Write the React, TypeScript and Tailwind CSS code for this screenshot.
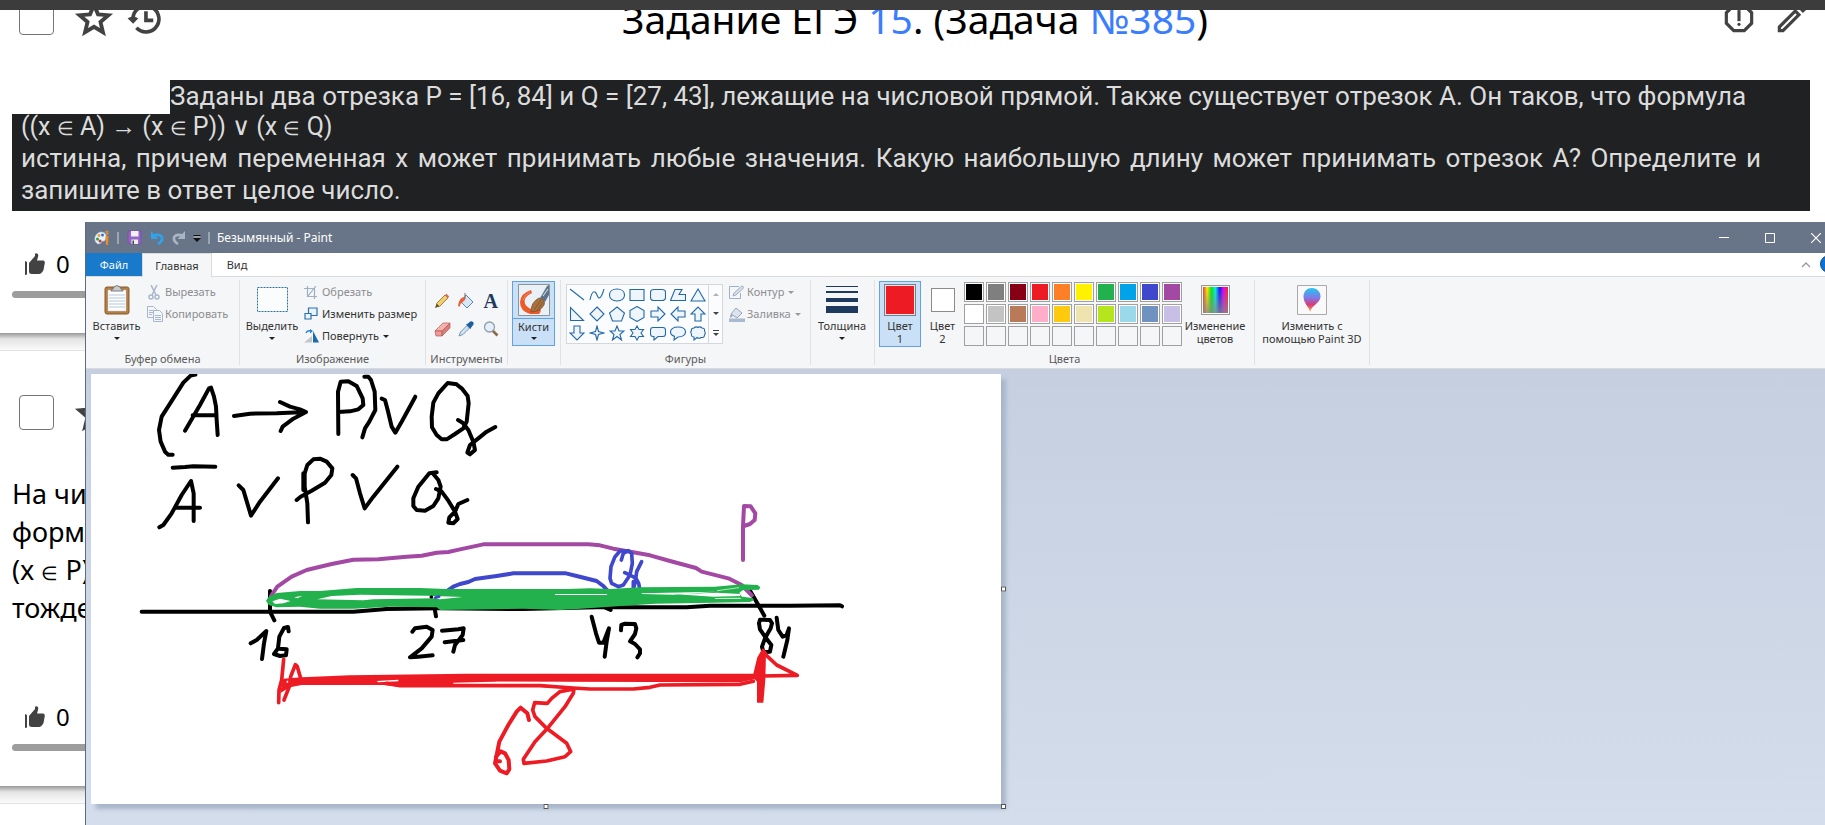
import type { ReactNode } from "react";

const TOP_COLORS = ["#000000", "#7f7f7f", "#880015", "#ed1c24", "#ff7f27", "#fff200", "#22b14c", "#00a2e8", "#3f48cc", "#a349a4"];
const BOTTOM_COLORS = ["#ffffff", "#c3c3c3", "#b97a57", "#ffaec9", "#ffc90e", "#efe4b0", "#b5e61d", "#99d9ea", "#7092be", "#c8bfe7"];
const EMPTY_SLOTS = Array.from({ length: 10 }, () => "");

const SHAPES: { name: string; d: string }[] = [
  { name: "Линия", d: "M1 2L15 13" },
  { name: "Кривая", d: "M1 13C3 3 6 3 8 8S12 12 15 2" },
  { name: "Овал", d: "M8 2C12.500 2 15.500 4.500 15.500 8S12.500 14 8 14S.5 11.500 .5 8S3.500 2 8 2Z" },
  { name: "Прямоугольник", d: "M1 2.500H15V13.500H1Z" },
  { name: "Скруглённый прямоугольник", d: "M4 2.500H12Q15.500 2.500 15.500 5.500V10.500Q15.500 13.500 12 13.500H4Q.5 13.500 .5 10.500V5.500Q.5 2.500 4 2.500Z" },
  { name: "Многоугольник", d: "M5 2.500H12L9 7.500H15.500V13.500H.5Z" },
  { name: "Треугольник", d: "M8 2L15 14H1Z" },
  { name: "Прямоугольный треугольник", d: "M1.500 1.500V14.500H14.500Z" },
  { name: "Ромб", d: "M8 1L15 8L8 15L1 8Z" },
  { name: "Пятиугольник", d: "M8 1L15.500 7L12.500 15H3.500L.5 7Z" },
  { name: "Шестиугольник", d: "M8 .5L15 4.500V11.500L8 15.500L1 11.500V4.500Z" },
  { name: "Стрелка вправо", d: "M1 5H8V1L15 8L8 15V11H1Z" },
  { name: "Стрелка влево", d: "M15 5H8V1L1 8L8 15V11H15Z" },
  { name: "Стрелка вверх", d: "M5 15V8H1L8 1L15 8H11V15Z" },
  { name: "Стрелка вниз", d: "M5 1V8H1L8 15L15 8H11V1Z" },
  { name: "Звезда 4", d: "M8 1L9.500 6.500L15 8L9.500 9.500L8 15L6.500 9.500L1 8L6.500 6.500Z" },
  { name: "Звезда 5", d: "M8 1L10 6H15L11 9.500L12.500 15L8 11.500L3.500 15L5 9.500L1 6H6Z" },
  { name: "Звезда 6", d: "M8 1L10 4.500H14.500L12 8L14.500 11.500H10L8 15L6 11.500H1.500L4 8L1.500 4.500H6Z" },
  { name: "Прямоугольная выноска", d: "M3 2.500H13Q15.500 2.500 15.500 5V9Q15.500 11.500 13 11.500H8L4 15V11.500H3Q.5 11.500 .5 9V5Q.5 2.500 3 2.500Z" },
  { name: "Овальная выноска", d: "M8 2C12.500 2 15.500 4 15.500 7S12.500 12 8 12L4 15L4.500 11.300C2 10.500 .5 9 .5 7C.5 4 3.500 2 8 2Z" },
  { name: "Выноска-облако", d: "M4 3Q6 1 8 2.500Q10 1 12 3Q15 3 14.500 6Q16 8 14.500 10Q14.500 13 11 12.500Q9 14 7 12.500L4 15V12Q1 12 1.500 9Q0 7 1.500 5.500Q1 3 4 3Z" },
];

function Caret({ className = "text-[#222]" }: { className?: string }) {
  return (
    <svg aria-hidden="true" className={className} width="6" height="3" viewBox="0 0 6 3" fill="currentColor">
      <path d="M0 0H6L3 3Z" />
    </svg>
  );
}

function ThumbIcon() {
  return (
    <svg aria-hidden="true" width="22" height="22" viewBox="0 0 22 22" fill="#424242">
      <path d="M1 8L3 9V21.500L1 22Z" />
      <path d="M5 10L11 3V1Q11.500 0 12.500 .2Q15 1 14 4L13 7.500H19.500Q21 8 20.800 10L19.500 17Q17.500 21 15 21H8Q5 21 5 18.500Z" />
    </svg>
  );
}

function StarIcon() {
  return (
    <svg aria-hidden="true" width="42" height="42" viewBox="0 -.7 24 24" fill="none" stroke="#424242" strokeWidth="2.200">
      <path d="M12 3.800L14.300 9.200L20.200 9.700L15.700 13.600L17.100 19.400L12 16.300L6.900 19.400L8.300 13.600L3.800 9.700L9.700 9.200Z" />
    </svg>
  );
}

function TaskHeader({ id, children }: { id: string; children: ReactNode }) {
  return (
    <header className="flex h-[35px] items-center pr-[14px] pl-[19px]">
      <div className="flex flex-1 items-center">
        <label htmlFor={id} className="sr-only">Выбрать задачу</label>
        <input id={id} type="checkbox" className="size-[35px] shrink-0 appearance-none rounded border border-[#767676] bg-white" />
        <button aria-label="В избранное" className="ml-[19px] shrink-0"><StarIcon /></button>
        <button aria-label="История" className="ml-[11px] shrink-0">
          <svg aria-hidden="true" width="38" height="38" viewBox="0 0 24 24" fill="none" stroke="#424242" strokeWidth="2.300">
            <path d="M4.400 12.500A8.200 8.200 0 1 1 6.600 18.200" />
            <path d="M12.600 7.800V13.500H17.200" />
            <path d="M1 12.200L4.500 10.800L7.800 12.200L4.500 15.700Z" fill="#424242" stroke="none" />
          </svg>
        </button>
      </div>
      <h2 className="pt-[2px] text-center text-[39px] leading-10 whitespace-nowrap text-black">{children}</h2>
      <div className="flex flex-1 items-center justify-end">
        <button aria-label="Сообщить об ошибке" className="shrink-0">
          <svg aria-hidden="true" width="38" height="38" viewBox="0 0 24 24" fill="#424242">
            <path d="M15.730 3H8.270L3 8.270v7.460L8.270 21h7.460L21 15.730V8.270L15.730 3zM19 14.900L14.900 19H9.100L5 14.900V9.100L9.100 5h5.800L19 9.100v5.800z" />
            <circle cx="12" cy="16" r="1" />
            <path d="M11 7h2v7h-2z" />
          </svg>
        </button>
        <button aria-label="Редактировать" className="ml-[15px] shrink-0">
          <svg aria-hidden="true" width="38" height="38" viewBox="0 0 24 24" fill="#424242">
            <path d="M14.060 9.020l.92.92L5.920 19H5v-.92l9.060-9.060M17.660 3c-.25 0-.51.1-.7.290l-1.830 1.830 3.750 3.750 1.830-1.830c.39-.39.39-1.020 0-1.410l-2.340-2.340c-.2-.2-.45-.29-.71-.29zm-3.600 3.190L3 17.250V21h3.750L17.810 9.940l-3.750-3.750z" />
          </svg>
        </button>
      </div>
    </header>
  );
}

function TaskFooter() {
  return (
    <footer className="pl-3">
      <button className="ml-3 flex h-[22px] items-center gap-[10px] text-[24px] leading-[22px] text-black">
        <ThumbIcon />0
      </button>
      <div className="mt-4 mr-3 h-[7px] rounded-full bg-[#9d9d9d]" />
    </footer>
  );
}

function CardGap() {
  return <div className="h-[18px] shrink-0 border-b border-[#e2e2e2] bg-linear-to-b from-[#999] via-[#e4e4e4] via-35% to-[#fbfbfb]" />;
}

function ElementOf() {
  return <span className="text-[19px] leading-none">∈</span>;
}

function Group({ label, className, children }: { label?: string; className: string; children: ReactNode }) {
  return (
    <section className={`flex shrink-0 flex-col border-r border-[#e0e2e5] ${className}`}>
      <div className="flex grow">{children}</div>
      <h3 className="h-3 text-center leading-3 text-[#5a5a5a]">{label}</h3>
    </section>
  );
}

function BigButton({ icon, text, caret, className }: { icon: ReactNode; text: ReactNode; caret?: boolean; className: string }) {
  return (
    <button className={`flex h-[66px] shrink-0 flex-col items-center ${className}`}>
      <span className="flex h-[39px] w-full items-center justify-center">{icon}</span>
      <span className="leading-[13px]">{text}</span>
      {caret && <span className="mt-[5px] flex"><Caret /></span>}
    </button>
  );
}

function RowButton({ icon, text, muted, caret }: { icon: ReactNode; text: string; muted?: boolean; caret?: boolean }) {
  return (
    <button className={`flex h-[22px] items-center whitespace-nowrap ${muted ? "text-[#8b8d91]" : "text-[#333]"}`}>
      <span className="flex w-[18px] shrink-0">{icon}</span>
      <span>{text}</span>
      {caret && <span className="ml-1"><Caret className={muted ? "text-[#999]" : "text-[#222]"} /></span>}
    </button>
  );
}

function TitleBar() {
  return (
    <div className="flex h-[31px] shrink-0 items-center bg-[#687588] pl-2 text-[12px] text-white">
      <svg aria-hidden="true" width="16" height="16" viewBox="0 0 16 16">
        <path d="M1 7Q3 2 8 2Q13 3 12 8Q11 12 8 11Q7 14 4 14Q0 12 1 7Z" fill="#e6f1fb" stroke="#a8c8e4" strokeWidth=".6" />
        <circle cx="3.500" cy="9" r="1.500" fill="#3b9a3f" />
        <circle cx="5" cy="5.500" r="1.400" fill="#e8a030" />
        <circle cx="8.500" cy="5" r="1.500" fill="#3a6fd0" />
        <circle cx="6" cy="11" r="1.500" fill="#c93a3a" />
        <path d="M11.500 6H14.500L14 15H12Z" fill="#f08a24" />
        <path d="M11 1L14.500 .5V5H12Z" fill="#c98a4a" />
      </svg>
      <span className="ml-[7px] h-3 w-[2px] bg-[#9aa4b2]" />
      <button aria-label="Сохранить" className="ml-2">
        <svg aria-hidden="true" width="15" height="15" viewBox="0 0 15 15">
          <path d="M1 1H14V14H3L1 12Z" fill="#9467c4" stroke="#7c4fae" />
          <path d="M4 1H11.500V6.500H4Z" fill="#f4f0fa" />
          <path d="M4.500 9.500H11V14H4.500Z" fill="#eee" />
          <path d="M5.500 10.500H7V14H5.500Z" fill="#444" />
        </svg>
      </button>
      <button aria-label="Отменить" className="ml-2">
        <svg aria-hidden="true" width="14" height="14" viewBox="0 0 14 14" fill="none">
          <path d="M3 5Q10 2 12 6.500Q13 10 8 13" stroke="#2fa4ee" strokeWidth="2.600" />
          <path d="M1 0V8H8.500Z" fill="#2fa4ee" />
        </svg>
      </button>
      <button aria-label="Повторить" className="ml-2">
        <svg aria-hidden="true" width="14" height="14" viewBox="0 0 14 14" fill="none">
          <path d="M11 5Q4 2 2 6.500Q1 10 6 13" stroke="#a9b4c4" strokeWidth="2.600" />
          <path d="M13 0V8H5.500Z" fill="#a9b4c4" />
        </svg>
      </button>
      <button aria-label="Настройка панели" className="ml-[7px]">
        <svg aria-hidden="true" width="8" height="8" viewBox="0 0 8 8">
          <path d="M.5 1H7.500V2.500H.5Z" fill="#111" />
          <path d="M0 4H8L4 8Z" fill="#111" />
          <path d="M.5 2.500H7.500V3.300H.5Z" fill="#fff" />
        </svg>
      </button>
      <span className="ml-[7px] h-3 w-[2px] bg-[#9aa4b2]" />
      <h1 className="ml-[7px]">Безымянный - Paint</h1>
      <div className="ml-auto flex">
        <button aria-label="Свернуть" className="flex h-[31px] w-[46px] items-center justify-center">
          <svg aria-hidden="true" width="10" height="10" viewBox="0 0 10 10"><path d="M0 4.500H10" stroke="#fff" /></svg>
        </button>
        <button aria-label="Развернуть" className="flex h-[31px] w-[46px] items-center justify-center">
          <svg aria-hidden="true" width="10" height="10" viewBox="0 0 10 10" fill="none"><path d="M.5 .5H9.500V9.500H.5Z" stroke="#fff" /></svg>
        </button>
        <button aria-label="Закрыть" className="flex h-[31px] w-[46px] items-center justify-center">
          <svg aria-hidden="true" width="10" height="10" viewBox="0 0 10 10"><path d="M0 0L10 10M10 0L0 10" stroke="#fff" strokeWidth="1.200" /></svg>
        </button>
      </div>
    </div>
  );
}

function TabRow() {
  return (
    <nav className="flex h-6 shrink-0 border-b border-[#dadbdc] bg-white text-[#333]">
      <button className="h-[23px] w-14 bg-[#1979ca] text-white">Файл</button>
      <button className="-mb-px h-6 w-[70px] border-x border-t border-[#dadbdc] bg-[#f5f6f7]">Главная</button>
      <button className="h-[23px] w-[50px]">Вид</button>
      <button aria-label="Свернуть ленту" className="mr-[9px] ml-auto">
        <svg aria-hidden="true" width="10" height="6" viewBox="0 0 10 6" fill="none"><path d="M1 5L5 1L9 5" stroke="#999" strokeWidth="1.300" /></svg>
      </button>
      <button aria-label="Справка" className="mt-[2px] mr-[1px] size-[18px] rounded-full border border-[#0a4f94] bg-[#0b74d1] leading-4 text-white">?</button>
    </nav>
  );
}

function Tools() {
  return (
    <div className="mt-[6px] grid h-14 w-full grid-cols-3 place-items-center px-1">
      <button aria-label="Карандаш">
        <svg aria-hidden="true" width="16" height="16" viewBox="0 0 16 16">
          <path d="M1 15L2.500 10.500L5.500 13.500Z" fill="#6b5033" />
          <path d="M2.500 10.500L11 2L14 5L5.500 13.500Z" fill="#f2cf6b" stroke="#8a6a2c" strokeWidth=".8" />
          <path d="M11 2L12.500 .8L15.200 3.500L14 5Z" fill="#d66a62" />
        </svg>
      </button>
      <button aria-label="Заливка цветом">
        <svg aria-hidden="true" width="18" height="16" viewBox="0 0 18 16">
          <path d="M9 2L16 9L10 15L4 9Z" fill="#d5e6f4" stroke="#5f88ad" />
          <path d="M8 0V6" stroke="#6d6d6d" />
          <path d="M8 4Q2 4 1 13Q3 15 3.500 11L8 7Z" fill="#ee5f35" />
        </svg>
      </button>
      <button aria-label="Текст" className="font-[Liberation_Serif,serif] text-[20px] leading-5 font-bold text-[#1f3a5f]">A</button>
      <button aria-label="Ластик">
        <svg aria-hidden="true" width="17" height="15" viewBox="0 0 17 15" stroke="#b45a58" strokeWidth=".7">
          <path d="M1 9L9 1H16L8 9Z" fill="#f6b3ad" />
          <path d="M1 9H8V14H2Z" fill="#ee9a95" />
          <path d="M8 9L16 1V6L8 14Z" fill="#d97f7b" />
        </svg>
      </button>
      <button aria-label="Палитра">
        <svg aria-hidden="true" width="16" height="16" viewBox="0 0 16 16">
          <path d="M1 15L2.500 11L9 4.500L11.500 7L5 13.500Z" fill="#cfe3f2" stroke="#5f7f9c" strokeWidth=".8" />
          <path d="M8 3.500L10 2.500Q13 -1 15 1T13.500 6L12.500 8Z" fill="#1c5f9f" />
        </svg>
      </button>
      <button aria-label="Масштаб">
        <svg aria-hidden="true" width="16" height="16" viewBox="0 0 16 16">
          <path d="M9.500 9.500L14.500 14.500" stroke="#8c6a4c" strokeWidth="2.600" />
          <circle cx="6.500" cy="6" r="5" fill="#e3effa" stroke="#8f9cab" strokeWidth="1.300" />
        </svg>
      </button>
    </div>
  );
}

function Palette() {
  return (
    <div className="mt-[2px] grid shrink-0 grid-cols-10 gap-[2px] self-start">
      {[...TOP_COLORS, ...BOTTOM_COLORS, ...EMPTY_SLOTS].map((color, i) => (
        <button
          key={i}
          aria-label={color ? `Цвет ${color}` : "Пустая ячейка"}
          className={`size-5 border border-[#a0a0a0] p-px ${color ? "bg-white" : "bg-[#f5f6f7]"}`}
        >
          <span className="block size-4" style={{ backgroundColor: color || "transparent" }} />
        </button>
      ))}
    </div>
  );
}

function Ribbon() {
  return (
    <div className="flex h-[92px] shrink-0 border-b border-[#d8dadc] bg-[#f5f6f7] pt-[3px] pb-[3px] text-[#333]">
      <Group label="Буфер обмена" className="w-[154px]">
        <BigButton
          className="w-[61px]"
          text="Вставить"
          caret
          icon={
            <svg aria-hidden="true" width="26" height="30" viewBox="0 0 26 30">
              <rect x="1" y="2" width="24" height="27" rx="2" fill="#b47d43" stroke="#8a5b2b" />
              <path d="M4 5H22V26H4Z" fill="#fbfdff" stroke="#c4cdd6" strokeWidth=".5" />
              <path d="M5 10H21M5 13H21M5 16H21M5 19H21M5 22H21" stroke="#b8c9d9" />
              <path d="M7 5Q9 5 10 2Q13 -1 16 2Q17 5 19 5V6H7Z" fill="#c9cccf" stroke="#666" strokeWidth=".8" />
            </svg>
          }
        />
        <div className="mt-px">
          <RowButton
            muted
            text="Вырезать"
            icon={
              <svg aria-hidden="true" width="14" height="15" viewBox="0 0 14 15" fill="none" stroke="#a9b7ca" strokeWidth="1.500">
                <path d="M4 0L9 10M10 0L5 10" />
                <circle cx="4" cy="12" r="2" />
                <circle cx="10" cy="12" r="2" />
              </svg>
            }
          />
          <RowButton
            muted
            text="Копировать"
            icon={
              <svg aria-hidden="true" width="16" height="16" viewBox="0 0 16 16" fill="#f3f6fb" stroke="#a9b7ca">
                <path d="M.5 .5H6.500L9.500 3.500V11.500H.5Z" />
                <path d="M2 4.500H7M2 6.500H7M2 8.500H5" />
                <path d="M6.500 4.500H12.500L15.500 7.500V15.500H6.500Z" />
                <path d="M8 9.500H14M8 11.500H14M8 13.500H14" />
              </svg>
            }
          />
        </div>
      </Group>
      <Group label="Изображение" className="w-[186px]">
        <BigButton
          className="w-[64px]"
          text="Выделить"
          caret
          icon={
            <svg aria-hidden="true" width="31" height="25" viewBox="0 0 31 25" fill="#fbfcfe">
              <path d="M.5 .5H30.500V24.500H.5Z" stroke="#2a6fb0" strokeDasharray="2 1" />
            </svg>
          }
        />
        <div className="mt-px">
          <RowButton
            muted
            text="Обрезать"
            icon={
              <svg aria-hidden="true" width="13" height="13" viewBox="0 0 13 13" fill="none" stroke="#9fb0c4" strokeWidth="1.200">
                <path d="M3.500 0V10.500H13M0 2.500H10.500V13M12 0L4 10" />
              </svg>
            }
          />
          <RowButton
            text="Изменить размер"
            icon={
              <svg aria-hidden="true" width="14" height="14" viewBox="0 0 14 14" fill="#eaf4fc" stroke="#2a6fb0" strokeWidth="1.200">
                <path d="M4.500 1H13V8.500H4.500Z" />
                <path d="M1 6.500H7V12H1Z" />
              </svg>
            }
          />
          <RowButton
            text="Повернуть"
            caret
            icon={
              <svg aria-hidden="true" width="15" height="14" viewBox="0 0 15 14">
                <path d="M0 13.500H8V7Z" fill="#c3c7cc" />
                <path d="M9 2V13.500H15Z" fill="#1f68ab" />
                <path d="M2 4Q3 1 7 2" fill="none" stroke="#2a7fcf" strokeWidth="1.300" />
                <path d="M6 0V4.500L9 2Z" fill="#2a7fcf" />
              </svg>
            }
          />
        </div>
      </Group>
      <Group label="Инструменты" className="w-[82px]">
        <Tools />
      </Group>
      <Group className="w-[53px]">
        <button className="mt-px ml-1 flex h-[65px] w-[43px] flex-col items-center border border-[#62a2e4] bg-[#c9e0f7]">
          <span className="flex h-[37px] w-full items-center justify-center border-b border-[#62a2e4]">
            <svg aria-hidden="true" width="32" height="32" viewBox="0 0 32 32">
              <path d="M.5 .5H31.500V31.500H.5Z" fill="#e9f1f6" stroke="#8f9499" />
              <path d="M13 6Q3 9 2 18Q2 27 12 30H21Q24 27 22 24Q16 27 11 24Q5 20 7 15Q9 11 14 9Z" fill="#ec5a2b" />
              <path d="M5 16Q7 10 12 8" fill="none" stroke="#f58a5c" />
              <path d="M22 14L29 2L31 1V11L27 18Z" fill="#5c7389" />
              <path d="M25 12L30 5" stroke="#c8d4de" strokeWidth="1.200" />
              <path d="M13 28Q13 18 21 14Q28 16 26 21Q22 28 13 28Z" fill="#a8713f" stroke="#7b4f28" strokeWidth=".8" />
              <path d="M16 26L23 16M19 27L25 18" stroke="#7b4f28" strokeWidth=".7" />
            </svg>
          </span>
          <span className="leading-[15px]">Кисти</span>
          <span className="mt-[3px] flex"><Caret /></span>
        </button>
      </Group>
      <Group label="Фигуры" className="w-[250px]">
        <div className="mt-1 ml-[5px] flex h-[60px] w-[157px] shrink-0 border border-[#d5d7da] bg-[#fbfcfd]">
          <div className="grid w-[141px] grid-cols-7 grid-rows-3 place-items-center">
            {SHAPES.map((shape) => (
              <button key={shape.name} aria-label={shape.name}>
                <svg aria-hidden="true" width="16" height="16" viewBox="0 0 16 16" fill={shape.d.endsWith("Z") ? "#eef6fc" : "none"} stroke="#2468a8" strokeWidth="1.100">
                  <path d={shape.d} />
                </svg>
              </button>
            ))}
          </div>
          <div className="grid w-[14px] grid-rows-3 place-items-center border-l border-[#d5d7da]">
            <button aria-label="Вверх"><Caret className="rotate-180 text-[#b0b4ba]" /></button>
            <button aria-label="Вниз"><Caret className="text-[#444]" /></button>
            <button aria-label="Все фигуры" className="flex flex-col items-center gap-[2px]">
              <span className="h-px w-[6px] bg-[#444]" />
              <Caret className="text-[#444]" />
            </button>
          </div>
        </div>
        <div className="mt-px ml-[6px]">
          <RowButton
            muted
            caret
            text="Контур"
            icon={
              <svg aria-hidden="true" width="16" height="14" viewBox="0 0 16 14" fill="none" stroke="#9fb0c4">
                <path d="M10 1.500H.5V13.500H11.500V8" />
                <path d="M4 11L5 8L13 .8L15 2.500L7 10Z" fill="#d5deea" />
              </svg>
            }
          />
          <RowButton
            muted
            caret
            text="Заливка"
            icon={
              <svg aria-hidden="true" width="16" height="15" viewBox="0 0 16 15">
                <path d="M0 11.500H16V15H0Z" fill="#a9b9d0" />
                <path d="M7 1L13 6L8 11L2 7Z" fill="#dbe3ee" stroke="#94a6bd" />
                <path d="M2 7Q1 8 1 11L4 9Z" fill="#94a6bd" />
              </svg>
            }
          />
        </div>
      </Group>
      <Group className="w-16">
        <BigButton
          className="w-[62px]"
          text="Толщина"
          caret
          icon={
            <svg aria-hidden="true" width="32" height="28" viewBox="0 0 32 28" fill="#1f3a5f">
              <path d="M0 0H32V1H0ZM0 5H32V7H0ZM0 12H32V16H0ZM0 20H32V27H0Z" />
            </svg>
          }
        />
      </Group>
      <Group label="Цвета" className="w-[380px]">
        <button className="mt-px ml-1 flex h-[66px] w-[42px] shrink-0 flex-col items-center border border-[#62a2e4] bg-[#c9e0f7] leading-[13px]">
          <span className="mt-[2px] mb-[3px] block size-8 border border-[#7f7f7f] bg-[#ed1c24] outline-1 -outline-offset-2 outline-[#d8eafb]" />
          Цвет<br />1
        </button>
        <button className="mt-px flex h-[66px] w-[43px] shrink-0 flex-col items-center leading-[13px]">
          <span className="mt-[7px] mb-[7px] block size-6 border border-[#8c8c8c] bg-white" />
          Цвет<br />2
        </button>
        <Palette />
        <BigButton
          className="ml-[2px] w-[62px]"
          text={<>Изменение<br />цветов</>}
          icon={
            <span className="border border-[#999] bg-white p-px">
              <span className="block h-[26px] w-[25px] bg-[linear-gradient(to_top,#888c,transparent),linear-gradient(to_right,#f33,#fe0,#0e0,#0ee,#11f,#e0e,#f22)]" />
            </span>
          }
        />
      </Group>
      <Group className="w-[115px]">
        <BigButton
          className="w-[114px]"
          text={<>Изменить с<br />помощью Paint 3D</>}
          icon={
            <svg aria-hidden="true" width="30" height="30" viewBox="0 0 30 30">
              <defs>
                <linearGradient id="drop" x1="0" y1="0" x2="0" y2="1">
                  <stop offset="0" stopColor="#22c8ee" />
                  <stop offset=".4" stopColor="#7d7bea" />
                  <stop offset=".7" stopColor="#d93a78" />
                  <stop offset="1" stopColor="#fbb040" />
                </linearGradient>
              </defs>
              <path d="M.5 .5H29.500V29.500H.5Z" fill="#f9f9f9" stroke="#aaa" />
              <path d="M15 3C20 3 24 7 23.500 12C23 18 15 20 13 27C13 23 6 18 6.500 11C7 6 10 3 15 3Z" fill="url(#drop)" />
            </svg>
          }
        />
      </Group>
    </div>
  );
}

function Drawing() {
  return (
    <svg role="img" aria-label="Рисунок" className="block" width="910" height="430" viewBox="91 374 910 430" fill="none" strokeLinecap="round" strokeLinejoin="round">
      <g transform="translate(90 370) scale(.33333)" stroke="#000" strokeWidth="12">
        <path d="M316 14L302 17L280 38L250 85L215 140L207 180L212 215L225 245L235 254H248" />
        <path d="M285 182L330 105L357 55L363 53L372 80L378 110L380 150L383 195M308 136H378" />
        <path d="M432 138L480 131L560 130L648 126M570 96L600 110L630 118L648 126L610 146L578 170L572 183" />
        <path d="M745 192L744 65L752 35L775 34L800 48L818 85L820 105L805 118L780 124L745 126" />
        <path d="M823 20H835L843 30L854 65L856 120L838 155L825 175L817 202" />
        <path d="M875 86L885 90L893 120L905 170L916 188L935 155L976 80" />
        <path d="M1100 43L1073 39L1045 70L1030 98L1025 140L1026 172L1040 195L1055 208H1070L1095 192L1120 175L1130 155L1136 100L1133 78L1115 55L1098 42" />
        <path d="M1104 150L1118 158L1135 180L1150 215L1155 240L1140 253L1132 248L1140 225L1165 205L1190 185L1216 171" />
        <path d="M248 293L285 291L310 289L376 290" />
        <path d="M208 472L220 465L245 430L275 375L303 333L311 370V453M258 413H330" />
        <path d="M446 346L460 360L472 400L483 437L510 395L564 325" />
        <path d="M654 457L652 400L644 350V310L652 285L670 268L690 266L710 275L727 295L724 315L705 338L665 362L632 380L620 390M640 310V360" />
        <path d="M788 315L798 325L810 370L824 415L850 380L922 290" />
        <path d="M1040 307L1018 310L985 350L970 385V408L980 420L1005 422L1030 408L1045 385L1052 350L1045 330L1030 312" />
        <path d="M1038 357L1055 365L1075 392L1095 425L1103 447L1090 460L1075 458L1078 442L1095 425L1105 402L1132 390" />
      </g>
      <g transform="translate(240 490) scale(.33333)" strokeWidth="12">
        <path d="M-295 365H340L440 357L600 355L850 357L1070 352H1340L1410 347H1650L1800 346L1806 349" stroke="#000" />
        <path d="M90 303V365L103 391M583 350L588 379M1095 352L1112 360M1532 305L1555 345L1573 377" stroke="#000" />
        <path d="M93 318L112 290L155 260L200 240L275 222L340 209L415 208L500 200L545 197L590 188L625 186L660 178L730 163H1045L1080 166L1120 176L1230 196L1290 213L1368 234L1385 245L1465 265L1505 285L1535 316" stroke="#a349a4" />
        <path d="M600 318L640 290L660 282L685 276L705 267L770 258L820 250H978L1010 258L1070 273L1090 288L1110 310" stroke="#3f48cc" />
        <path d="M1144 210L1150 190L1165 182L1175 190L1177 220L1170 255L1150 285L1135 290L1115 280L1110 265L1113 230L1125 200L1140 183H1160M1154 248L1170 255L1188 265L1196 280L1199 296M1205 215L1190 245L1186 275L1180 298M1180 275V295" stroke="#3f48cc" strokeWidth="11" />
        <path d="M78 332L86 320L110 309L180 303H240L350 294H540L620 297H980L1050 295L1110 297L1200 292L1425 290L1505 283L1553 285L1561 292L1557 299L1508 301L1498 308L1506 320L1538 324L1542 331L1530 336L1420 338L1245 341L1110 350L1000 358L960 360L850 356L600 360L590 352L450 350L340 356H240L180 350L110 352L86 345Z" fill="#22b14c" />
        <path d="M97 334L120 326L152 333L130 340L105 342ZM163 322L187 317L172 325ZM232 328L275 318L360 314L560 317L668 321L600 328L580 325L400 328L370 331ZM945 312H1100L1102 315H945ZM1205 310L1430 305L1300 314L1205 312ZM1310 313L1430 308L1502 312L1500 318L1420 320ZM1425 324L1500 323L1505 326H1425Z" fill="#fff" />
        <path d="M1432 302L1496 293" stroke="#fff" strokeWidth="2" />
        <path d="M573 321H575" stroke="#000" strokeWidth="9" />
        <path d="M586 323L597 320" stroke="#3f48cc" strokeWidth="9" />
        <path d="M32 460L50 450L79 423L72 460L66 507M146 424L144 411L132 414L118 440L114 475L102 492L120 498L138 496L140 478L118 476M517 425L525 415L560 410L578 420L575 440L545 475L510 502L535 500L578 496M606 422L655 418L671 415L668 435L645 465L640 485M614 457L670 450" stroke="#000" />
        <path d="M1055 380L1068 430L1077 458H1090L1107 415L1100 455L1094 500M1143 421L1144 405L1155 401L1185 402L1189 415L1185 432L1170 454L1185 462L1200 478V490L1192 502" stroke="#000" />
        <path d="M1596 400L1590 390L1560 389L1557 400L1560 418L1575 440L1594 465L1590 485L1570 486L1566 470L1575 445L1592 415L1596 400M1610 383L1615 420L1628 440L1640 435L1647 415L1642 450L1630 500" stroke="#000" />
        <path d="M1509 210V110L1512 48L1532 49L1546 70L1544 90L1530 102L1512 108" stroke="#a349a4" />
        <path d="M130 566L185 562L330 556L680 551H1540L1560 548V565L1500 577L960 575H770L690 590H480L430 585H185L150 592L120 610Z" fill="#ed1c24" />
        <path d="M410 573L475 569V574L415 577ZM640 578L700 577L760 575L1000 576L900 582H640ZM140 572H148L146 578H140Z" fill="#fff" />
        <path d="M440 580L480 587H900L1000 594L1050 597H1180L1230 592L1260 585L1500 583L1540 574" stroke="#ed1c24" strokeWidth="11" />
        <path d="M131 508L125 570L117 600L116 638M132 630L148 590L152 560L166 524L172 530L182 565" stroke="#ed1c24" strokeWidth="11" />
        <path d="M1552 502L1568 475L1578 490L1576 570L1570 638H1551V575L1538 560L1545 530Z" fill="#ed1c24" />
        <path d="M1570 482L1580 497L1610 525L1672 556L1560 558" stroke="#ed1c24" strokeWidth="11" />
        <path d="M867 690L862 670L842 653L830 665L805 705L778 755L770 795L765 820L780 842L800 850L808 838L806 810L795 790L782 784L768 800M768 814H780" stroke="#ed1c24" />
        <path d="M922 640L884 638L878 660L885 680L920 715L980 760L992 785L975 800L920 813L852 820L850 808L885 755L920 718L975 650L1000 610L1002 597L960 605L935 625L922 640" stroke="#ed1c24" strokeWidth="11" />
      </g>
    </svg>
  );
}

function Handle({ className }: { className: string }) {
  return <span className={`absolute size-[5px] border border-[#555] bg-white ${className}`} />;
}

function PaintWindow() {
  return (
    <div className="absolute top-[222px] -right-[14px] bottom-0 left-[85px] flex flex-col border-l border-[#5d6b80] text-[11px] leading-4">
      <TitleBar />
      <TabRow />
      <Ribbon />
      <div className="grow bg-linear-to-b from-[#c5cfe0] to-[#d3ddeb] pt-[5px] pl-[5px]">
        <div className="relative w-fit bg-white shadow-[5px_5px_4px_#a9b6ca]">
          <Drawing />
          <Handle className="top-1/2 left-full -translate-y-1/2" />
          <Handle className="top-full left-1/2 -translate-x-1/2" />
          <Handle className="top-full left-full" />
        </div>
      </div>
    </div>
  );
}

export default function App() {
  return (
    <div className="relative h-screen overflow-hidden bg-white font-['Noto_Sans',sans-serif]">
      <div className="absolute inset-x-0 top-0 z-10 h-[10px] bg-[#3c3c3c]" />
      <article>
        <TaskHeader id="task-385">
          Задание ЕГЭ <a href="#ege15" className="text-[#3b7dff]">15</a>. (Задача <a href="#task385" className="text-[#3b7dff]">№385</a>)
        </TaskHeader>
        <div className="mt-[45px] mr-[15px] ml-3 bg-[#1f2123] pb-[5px] font-[Roboto,'Noto_Sans',sans-serif] text-[26px] leading-8 text-[#dcdcdc]">
          <div className="flex h-[34px]">
            <span className="w-[158px] shrink-0 bg-white" />
            <p className="whitespace-nowrap">Заданы два отрезка P = [16, 84] и Q = [27, 43], лежащие на числовой прямой. Также существует отрезок A. Он таков, что формула</p>
          </div>
          <p className="h-7 pl-[9px] text-[25px] leading-[26px]">((x <ElementOf /> A) → (x <ElementOf /> P)) ∨ (x <ElementOf /> Q)</p>
          <p className="pr-[49px] pl-[9px] text-justify">истинна, причем переменная x может принимать любые значения. Какую наибольшую длину может принимать отрезок A? Определите и запишите в ответ целое число.</p>
        </div>
        <div className="pt-[42px] pb-[35px]"><TaskFooter /></div>
      </article>
      <CardGap />
      <article className="pt-11">
        <TaskHeader id="task-386">
          Задание ЕГЭ <a href="#ege15" className="text-[#3b7dff]">15</a>.
        </TaskHeader>
        <div className="mt-[45px] pl-3 text-[27px] leading-[38px] text-black">
          <p>На чи</p>
          <p><a href="#formula" className="text-black">форм</a></p>
          <p>(x <ElementOf /> P)</p>
          <p>тожде</p>
        </div>
        <div className="pt-[79px] pb-[35px]"><TaskFooter /></div>
      </article>
      <CardGap />
      <PaintWindow />
    </div>
  );
}
